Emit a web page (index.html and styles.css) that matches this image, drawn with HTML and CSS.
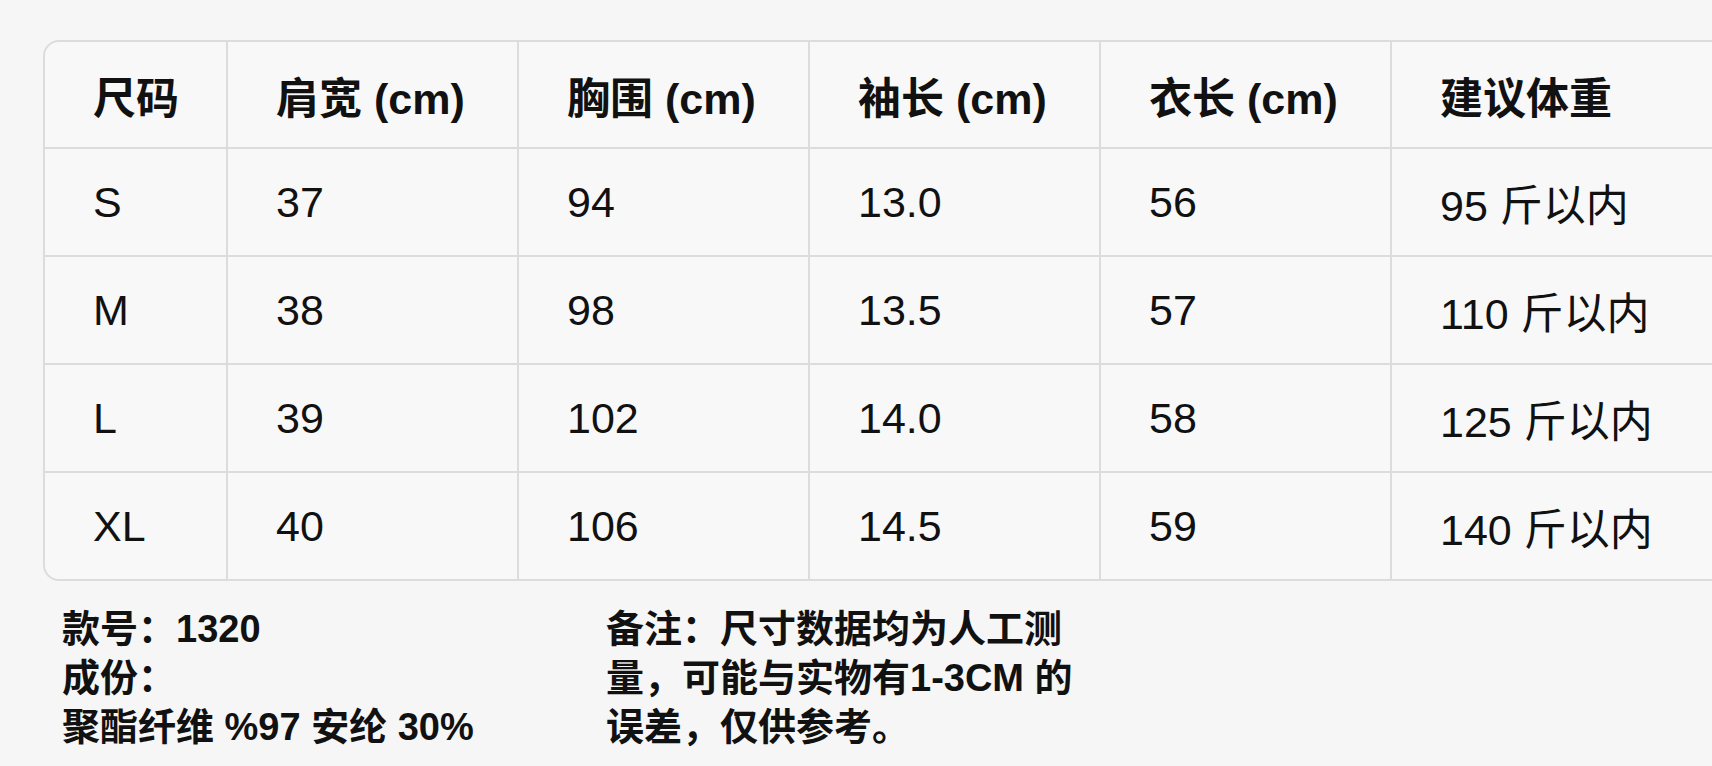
FILE: index.html
```html
<!DOCTYPE html>
<html lang="zh">
<head>
<meta charset="utf-8">
<title>尺码表</title>
<link rel="stylesheet" href="styles.css">
</head>
<body>
<div class="page">
  <table class="size-table">
    <colgroup>
      <col class="c1"><col class="cn"><col class="cn"><col class="cn"><col class="cn"><col class="clast">
    </colgroup>
    <thead>
      <tr><th>尺码</th><th>肩宽 (cm)</th><th>胸围 (cm)</th><th>袖长 (cm)</th><th>衣长 (cm)</th><th>建议体重</th></tr>
    </thead>
    <tbody>
      <tr><td>S</td><td>37</td><td>94</td><td>13.0</td><td>56</td><td>95 斤以内</td></tr>
      <tr><td>M</td><td>38</td><td>98</td><td>13.5</td><td>57</td><td>110 斤以内</td></tr>
      <tr><td>L</td><td>39</td><td>102</td><td>14.0</td><td>58</td><td>125 斤以内</td></tr>
      <tr><td>XL</td><td>40</td><td>106</td><td>14.5</td><td>59</td><td>140 斤以内</td></tr>
    </tbody>
  </table>
  <div class="notes">
    <div class="note-left">款号：1320<br>成份：<br>聚酯纤维 %97 安纶 30%</div>
    <div class="note-right">备注：尺寸数据均为人工测<br>量，可能与实物有1-3CM 的<br>误差，仅供参考。</div>
  </div>
</div>
</body>
</html>
```

FILE: styles.css
```css
html, body {
  margin: 0;
  padding: 0;
  background: #f6f6f6;
  overflow: hidden;
}
body {
  width: 1712px;
  height: 766px;
  font-family: "Liberation Sans", "Noto Sans CJK SC", sans-serif;
  color: #111;
}
.page {
  padding: 40px 0 0 43px;
}
.size-table {
  border-collapse: separate;
  border-spacing: 0;
  table-layout: fixed;
  width: 1720px;
  background: #f8f8f8;
  border-top: 2px solid #dcdcdc;
  border-left: 2px solid #dcdcdc;
  border-bottom: 2px solid #dcdcdc;
  border-radius: 16px 0 0 16px;
}
.c1 { width: 183px; }
.cn { width: 291px; }
.clast { width: 382px; }
.size-table th,
.size-table td {
  text-align: left;
  padding: 0 0 0 48px;
  border-right: 2px solid #dcdcdc;
  border-bottom: 2px solid #dcdcdc;
  font-size: 43px;
  white-space: nowrap;
}
.size-table th {
  height: 105px;
  font-weight: 700;
}
.size-table td {
  height: 106px;
  font-weight: 400;
}
.size-table tbody tr:last-child td {
  border-bottom: none;
}
.size-table tr > :last-child {
  border-right: none;
}
.notes {
  display: flex;
  margin-top: 24px;
  font-size: 38px;
  font-weight: 700;
  line-height: 49px;
}
.note-left {
  margin-left: 19px;
  width: 544px;
}
```
